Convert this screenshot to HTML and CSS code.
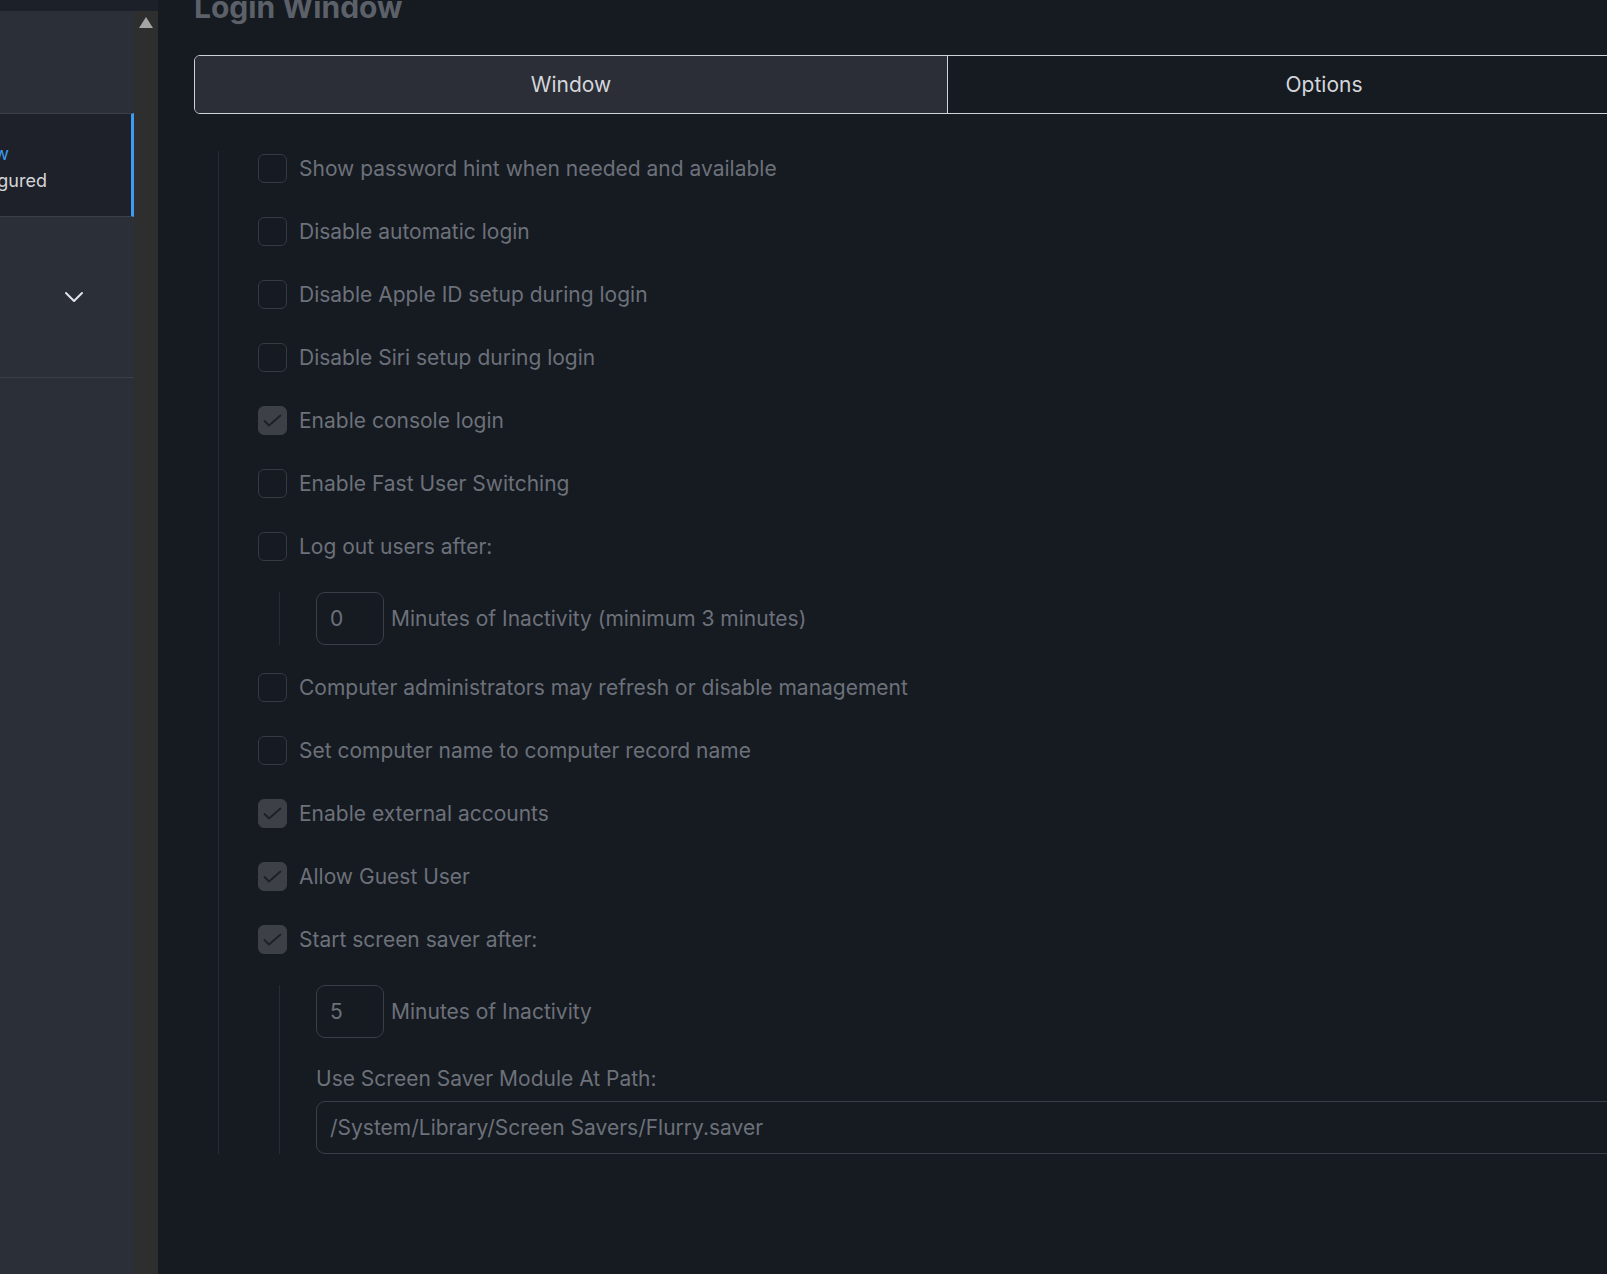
FILE: index.html
```html
<!DOCTYPE html>
<html>
<head>
<meta charset="utf-8">
<link rel="stylesheet" href="styles.css">
</head>
<body>
<div class="app">
  <aside class="sidebar">
    <div class="side-top"></div>
    <div class="side-panel">
      <div class="side-blank"></div>
      <div class="side-item selected">
        <div class="cut"><span class="cut-title">Login Window</span></div>
        <div class="cut"><span class="cut-sub">Not configured</span></div>
      </div>
      <div class="side-group">
        <svg class="chev" width="20" height="12" viewBox="0 0 20 12"><path d="M2 2 L10 10 L18 2" fill="none" stroke="#e2e4e8" stroke-width="2" stroke-linecap="round" stroke-linejoin="round"/></svg>
      </div>
      <div class="side-rest"></div>
    </div>
  </aside>
  <div class="scrollbar">
    <div class="scroll-cap"></div>
    <div class="scroll-up"></div>
  </div>
  <main class="main">
    <h1 class="title">Login Window</h1>
    <div class="tabs">
      <div class="tab active">Window</div>
      <div class="tab">Options</div>
    </div>
    <div class="list">
      <div class="row"><span class="cb"></span><span class="label">Show password hint when needed and available</span></div>
      <div class="row"><span class="cb"></span><span class="label">Disable automatic login</span></div>
      <div class="row"><span class="cb"></span><span class="label">Disable Apple ID setup during login</span></div>
      <div class="row"><span class="cb"></span><span class="label">Disable Siri setup during login</span></div>
      <div class="row"><span class="cb on"><svg width="29" height="29" viewBox="0 0 29 29"><path d="M6.5 15 L11 19.5 L22.5 9.5" fill="none" stroke="#1d2026" stroke-width="1.8" stroke-linecap="round" stroke-linejoin="round"/></svg></span><span class="label">Enable console login</span></div>
      <div class="row"><span class="cb"></span><span class="label">Enable Fast User Switching</span></div>
      <div class="row"><span class="cb"></span><span class="label">Log out users after:</span></div>
      <div class="sub sub1">
        <div class="inline"><span class="num">0</span><span class="label">Minutes of Inactivity (minimum 3 minutes)</span></div>
      </div>
      <div class="row"><span class="cb"></span><span class="label">Computer administrators may refresh or disable management</span></div>
      <div class="row"><span class="cb"></span><span class="label">Set computer name to computer record name</span></div>
      <div class="row"><span class="cb on"><svg width="29" height="29" viewBox="0 0 29 29"><path d="M6.5 15 L11 19.5 L22.5 9.5" fill="none" stroke="#1d2026" stroke-width="1.8" stroke-linecap="round" stroke-linejoin="round"/></svg></span><span class="label">Enable external accounts</span></div>
      <div class="row"><span class="cb on"><svg width="29" height="29" viewBox="0 0 29 29"><path d="M6.5 15 L11 19.5 L22.5 9.5" fill="none" stroke="#1d2026" stroke-width="1.8" stroke-linecap="round" stroke-linejoin="round"/></svg></span><span class="label">Allow Guest User</span></div>
      <div class="row"><span class="cb on"><svg width="29" height="29" viewBox="0 0 29 29"><path d="M6.5 15 L11 19.5 L22.5 9.5" fill="none" stroke="#1d2026" stroke-width="1.8" stroke-linecap="round" stroke-linejoin="round"/></svg></span><span class="label">Start screen saver after:</span></div>
      <div class="sub sub2">
        <div class="inline"><span class="num">5</span><span class="label">Minutes of Inactivity</span></div>
        <div class="field-label">Use Screen Saver Module At Path:</div>
        <div class="path">/System/Library/Screen Savers/Flurry.saver</div>
      </div>
    </div>
  </main>
</div>
</body>
</html>
```

FILE: styles.css
```css
html, body {
  margin: 0;
  padding: 0;
  background: #161a21;
  overflow: hidden;
  height: 1274px;
}
body {
  font-family: Inter, "Noto Sans", sans-serif;
}
.app {
  display: flex;
  height: 1274px;
}
.sidebar {
  flex: 0 0 134px;
  display: flex;
  flex-direction: column;
  background: #2b2f37;
}
.side-top {
  height: 11px;
  background: #1c2028;
}
.side-panel {
  flex: 1;
  display: flex;
  flex-direction: column;
}
.side-blank {
  height: 102px;
}
.side-item {
  height: 98px;
  padding-top: 4px;
  box-sizing: content-box;
  border-top: 1px solid #3b3f47;
  border-bottom: 1px solid #3b3f47;
  border-right: 3px solid #3b9cf0;
  background: #1e2129;
  display: flex;
  flex-direction: column;
  justify-content: center;
  gap: 5px;
  font-size: 18px;
}
.cut {
  width: 9px;
  display: flex;
  justify-content: flex-end;
  white-space: nowrap;
  line-height: 22px;
}
.cut + .cut {
  width: 47px;
}
.cut-title {
  color: #3b9cf0;
}
.cut-sub {
  color: #d4d6da;
}
.side-group {
  height: 161px;
  border-bottom: 1px solid #3a3e46;
  display: flex;
  align-items: center;
  justify-content: center;
  padding-left: 14px;
  box-sizing: border-box;
}
.chev {
  display: block;
}
.side-rest {
  flex: 1;
}
.scrollbar {
  flex: 0 0 24px;
  background: #2e2e2e;
  display: flex;
  flex-direction: column;
  align-items: center;
}
.scroll-cap {
  height: 11px;
  width: 100%;
  background: #1c2028;
}
.scroll-up {
  margin-top: 6px;
  width: 0;
  height: 0;
  border-left: 7px solid transparent;
  border-right: 7px solid transparent;
  border-bottom: 11px solid #a4a4a4;
}
.main {
  flex: 0 0 auto;
  width: 1543px;
  padding-left: 36px;
  display: flex;
  flex-direction: column;
}
.title {
  margin: -11px 0 0 0;
  font-size: 30px;
  line-height: 36px;
  font-weight: 700;
  color: #5c6169;
}
.tabs {
  margin-top: 30px;
  width: 1507px;
  height: 59px;
  box-sizing: border-box;
  border: 1px solid #cfd2d7;
  border-radius: 6px;
  display: flex;
  overflow: hidden;
}
.tab {
  flex: 1;
  display: flex;
  align-items: center;
  justify-content: center;
  font-size: 21px;
  color: #d3d6db;
}
.tab.active {
  background: #2b2e36;
  border-right: 1px solid #cfd2d7;
}
.list {
  margin-top: 37px;
  margin-left: 24px;
  border-left: 1px solid #272b33;
  padding-left: 39px;
  display: flex;
  flex-direction: column;
  gap: 29px;
}
.row {
  height: 34px;
  display: flex;
  align-items: center;
}
.cb {
  flex: 0 0 auto;
  width: 29px;
  height: 29px;
  box-sizing: border-box;
  border: 1px solid #353a43;
  border-radius: 6px;
  margin-right: 12px;
  display: flex;
}
.cb.on {
  background: #3d4047;
  border-color: #3d4047;
}
.cb.on svg {
  margin: -1px;
}
.label {
  font-size: 21px;
  color: #6c717a;
  white-space: nowrap;
}
.sub {
  margin-left: 21px;
  border-left: 1px solid #272b33;
  padding-left: 36px;
  display: flex;
  flex-direction: column;
}
.sub1 {
  margin-bottom: -4px;
}
.sub2 {
  margin-top: 0;
}
.inline {
  display: flex;
  align-items: center;
  gap: 7px;
}
.num {
  width: 68px;
  height: 53px;
  box-sizing: border-box;
  border: 1px solid #393e47;
  border-radius: 9px;
  padding-left: 13px;
  display: flex;
  align-items: center;
  font-size: 21px;
  color: #6c717a;
}
.field-label {
  margin-top: 29px;
  font-size: 21px;
  line-height: 24px;
  color: #6c717a;
}
.path {
  margin-top: 10px;
  width: 1385px;
  height: 53px;
  box-sizing: border-box;
  border: 1px solid #393e47;
  border-radius: 9px;
  padding-left: 13px;
  display: flex;
  align-items: center;
  font-size: 21px;
  color: #6c717a;
}
```
